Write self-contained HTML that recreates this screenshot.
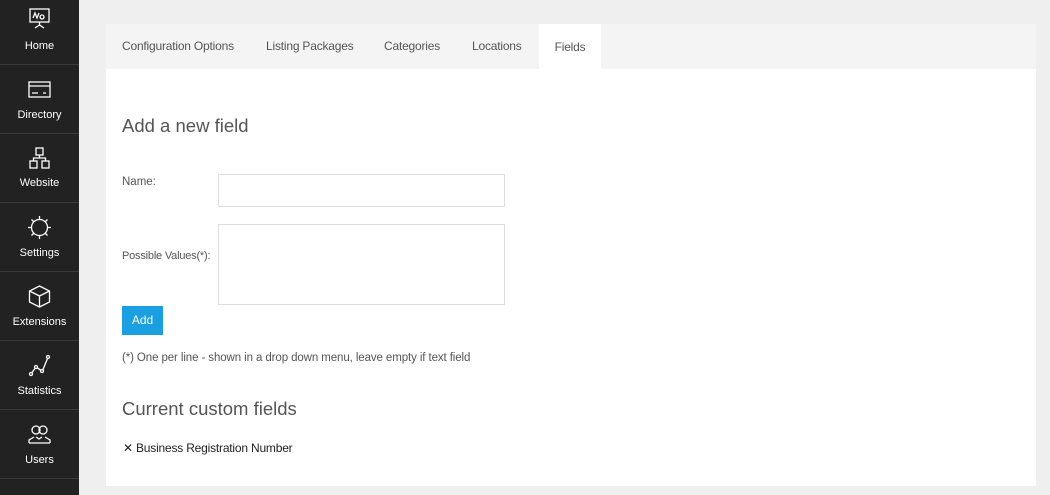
<!DOCTYPE html>
<html><head><style>
*{box-sizing:border-box;margin:0;padding:0}
body{width:1050px;height:495px;background:#efefef;font-family:"Liberation Sans",sans-serif;position:relative;overflow:hidden;color:#444}
.sb{position:absolute;left:0;top:0;width:79px;height:495px;background:#222}
.it{position:absolute;left:0;width:79px;height:69px;border-bottom:1px solid #3a3a3a;color:#fff;font-size:11px;text-align:center}
.it svg{position:absolute;left:27px;width:25px;height:25px;fill:none;stroke:#fff;stroke-width:1.3}
.it span{position:absolute;left:0;right:0}
.panel{position:absolute;left:106px;top:24px;width:930px;height:462px;background:#fff}
.tabs{position:absolute;left:0;top:0;width:930px;height:45px;background:#f4f4f4}
.tab{position:absolute;top:0;height:45px;line-height:45px;font-size:12px;color:#555;letter-spacing:-0.2px}
.abs{position:absolute}
.inp{position:absolute;border:1px solid #ddd;background:#fff}
</style></head><body>
<div class="sb">
<div class="it" style="top:-4px"><svg style="top:10px" viewBox="0 0 25 25"><rect x="3" y="3" width="19" height="13"/><path d="M6 12l2-5 2 5 2-5M15 9a2 2 0 1 0 .1 0M12.5 16v3M8 22l4.5-3 4.5 3"/></svg><span style="top:44px">Home</span></div>
<div class="it" style="top:65px"><svg style="top:12px" viewBox="0 0 25 25"><rect x="2" y="5" width="21" height="15"/><path d="M2 9h21M5 16h6M16 16h3"/></svg><span style="top:44px">Directory</span></div>
<div class="it" style="top:134px"><svg style="top:12px" viewBox="0 0 25 25"><rect x="9" y="2" width="7" height="7"/><rect x="3" y="15" width="7" height="7"/><rect x="15" y="15" width="7" height="7"/><path d="M12.5 9v3M6.5 15v-3h12v3"/></svg><span style="top:43px">Website</span></div>
<div class="it" style="top:203px"><svg style="top:12px" viewBox="0 0 25 25"><circle cx="12.5" cy="12.5" r="8"/><path d="M12.5 1v3M12.5 21v3M1 12.5h3M21 12.5h3M4.5 4.5l2 2M18.5 18.5l2 2M4.5 20.5l2-2M18.5 6.5l2-2"/></svg><span style="top:44px">Settings</span></div>
<div class="it" style="top:272px"><svg style="top:12px" viewBox="0 0 25 25"><path d="M12.5 2l10 5v11l-10 5-10-5V7zM2.5 7l10 5 10-5M12.5 12v11"/></svg><span style="top:44px">Extensions</span></div>
<div class="it" style="top:341px"><svg style="top:12px" viewBox="0 0 25 25"><circle cx="4" cy="21" r="1.5"/><circle cx="9" cy="14" r="1.5"/><circle cx="15" cy="18" r="1.5"/><circle cx="21" cy="4" r="1.5"/><path d="M5 19.5l3-4M10.3 14.8l3.5 2.5M16 16.5l4.5-11"/></svg><span style="top:44px">Statistics</span></div>
<div class="it" style="top:410px"><svg style="top:12px" viewBox="0 0 25 25"><circle cx="9" cy="8" r="4"/><circle cx="16" cy="8" r="4"/><path d="M2 21v-3l5-3M23 21v-3l-5-3M2 21h21M9 15l3 2 3-2"/></svg><span style="top:44px">Users</span></div>
</div>
<div class="panel">
<div class="tabs">
<div class="tab" style="left:16px">Configuration Options</div>
<div class="tab" style="left:160px">Listing Packages</div>
<div class="tab" style="left:278px">Categories</div>
<div class="tab" style="left:366px">Locations</div>
<div class="tab" style="left:433px;width:62px;background:#fff;text-align:center;line-height:47px">Fields</div>
</div>
<div class="abs" style="left:16px;top:91px;font-size:18.5px;color:#555">Add a new field</div>
<div class="abs" style="left:16px;top:152px;font-size:11.5px;color:#555">Name:</div>
<div class="inp" style="left:112px;top:150px;width:287px;height:33px"></div>
<div class="abs" style="left:16px;top:226px;font-size:11px;color:#555;letter-spacing:-0.2px">Possible Values(*):</div>
<div class="inp" style="left:112px;top:200px;width:287px;height:81px"></div>
<div class="abs" style="left:16px;top:282px;width:41px;height:29px;background:#1a9fe0;color:#fff;font-size:12px;text-align:center;line-height:29px">Add</div>
<div class="abs" style="left:16px;top:328px;font-size:11.5px;color:#555;letter-spacing:-0.1px">(*) One per line - shown in a drop down menu, leave empty if text field</div>
<div class="abs" style="left:16px;top:374px;font-size:18.5px;color:#555">Current custom fields</div>
<div class="abs" style="left:17px;top:417px;font-size:12px;color:#222;letter-spacing:-0.2px">✕ Business Registration Number</div>
</div>
</body></html>
